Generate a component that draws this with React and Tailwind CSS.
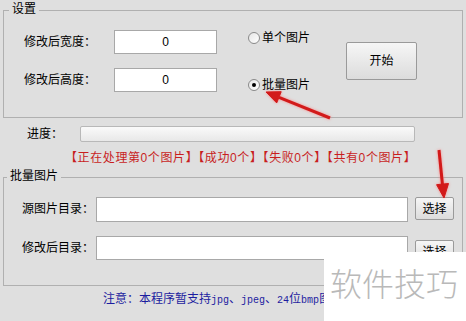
import React from 'react';

const Btn = ({ children, className }) => (
  <div
    className={
      'flex items-center justify-center border border-[#9a9a9a] rounded-[2px] bg-gradient-to-b from-[#f6f6f6] to-[#dcdcdc] ' +
      className
    }
  >
    {children}
  </div>
);

const Radio = ({ checked, label }) => (
  <div className="flex items-center h-[16px]">
    <div className="w-[12px] h-[12px] rounded-full border border-[#8a8a8a] bg-gradient-to-br from-[#e6e6e6] to-white flex items-center justify-center">
      {checked && <div className="w-[4px] h-[4px] rounded-full bg-black" />}
    </div>
    <span className="ml-[2px]">{label}</span>
  </div>
);

const App = () => {
  return (
    <div className="relative w-[466px] h-[321px] overflow-hidden bg-[#dfdfdf] text-[12px] leading-[16px] text-black font-['Liberation_Sans','Noto_Sans_CJK_SC',sans-serif]">
      {/* 设置 */}
      <div className="mx-[3px] mt-[10px] h-[108px] border border-[#b0b0b0]">
        <div className="-mt-[10px] ml-[5px] px-[3px] w-fit bg-[#dfdfdf]">设置</div>
        <div className="flex items-start mt-[13px]">
          <div className="pl-[20px] flex flex-col gap-[14px]">
            <div className="flex items-center">
              <span className="w-[90px]">修改后宽度：</span>
              <div className="w-[103px] h-[24px] border border-[#a8a8a8] bg-white text-center leading-[22px]">0</div>
            </div>
            <div className="flex items-center">
              <span className="w-[90px]">修改后高度：</span>
              <div className="w-[103px] h-[24px] border border-[#a8a8a8] bg-white text-center leading-[22px]">0</div>
            </div>
          </div>
          <div className="ml-[31px] w-[98px] flex flex-col">
            <Radio label="单个图片" />
            <div className="mt-[31px]">
              <Radio checked label="批量图片" />
            </div>
          </div>
          <Btn className="mt-[12px] w-[71px] h-[38px]">开始</Btn>
        </div>
      </div>

      {/* 进度 */}
      <div className="flex items-center mt-[8px] h-[16px]">
        <span className="pl-[27px] w-[80px]">进度：</span>
        <div className="w-[335px] h-[16px] border border-[#b8b8b8] rounded-[2px] bg-gradient-to-b from-[#fafafa] to-[#e8e8e8]" />
      </div>

      <div className="mt-[8px] pl-[65px] text-[#c81e1e] tracking-[0.6px] whitespace-nowrap">
        【正在处理第0个图片】【成功0个】【失败0个】【共有0个图片】
      </div>

      {/* 批量图片 */}
      <div className="mx-[3px] mt-[11px] h-[109px] border border-[#b0b0b0]">
        <div className="-mt-[10px] ml-[3px] px-[3px] w-fit bg-[#dfdfdf]">批量图片</div>
        <div className="mt-[13px] flex items-start">
          <span className="pl-[18px] w-[92px] leading-[25px]">源图片目录：</span>
          <div className="w-[312px] h-[25px] border border-[#a8a8a8] bg-white" />
          <Btn className="ml-[7px] w-[39px] h-[23px]">选择</Btn>
        </div>
        <div className="mt-[14px] flex items-start">
          <span className="pl-[18px] w-[92px] leading-[24px]">修改后目录：</span>
          <div className="w-[312px] h-[24px] border border-[#a8a8a8] bg-white" />
          <Btn className="ml-[7px] mt-[4px] w-[39px] h-[23px]">选择</Btn>
        </div>
      </div>

      <div className="mt-[5px] w-[324px] overflow-hidden pl-[103px] text-[#1c1ca0] whitespace-nowrap">
        注意：本程序暂支持<span className="font-['Liberation_Mono',monospace] text-[10px]">jpg</span>、<span className="font-['Liberation_Mono',monospace] text-[10px]">jpeg</span>、<span className="font-['Liberation_Mono',monospace] text-[10px]">24</span>位<span className="font-['Liberation_Mono',monospace] text-[10px]">bmp</span>图片
      </div>

      {/* watermark */}
      <div className="absolute left-[324px] top-[252px] w-[142px] h-[69px] bg-white">
        <div className="mt-[14px] pl-[6px] text-[32px] leading-[32px] text-[#b9b9b9] font-['Noto_Sans_CJK_SC',sans-serif] font-light whitespace-nowrap">
          软件技巧
        </div>
      </div>

      {/* arrows */}
      <svg className="absolute left-0 top-0 pointer-events-none" width="466" height="321">
        <g fill="#d21a1a" stroke="#d21a1a" style={{ filter: 'drop-shadow(0 0 1.5px rgba(255,120,120,0.8))' }}>
          <line x1="330" y1="118" x2="279" y2="97.3" strokeWidth="3" />
          <polygon points="266,92 281.2,91.7 276.7,102.9" strokeWidth="1" />
          <line x1="439" y1="150" x2="442.5" y2="185" strokeWidth="3" />
          <polygon points="444,198 448.5,183.5 436.6,184.7" strokeWidth="1" />
        </g>
      </svg>
    </div>
  );
};

export default App;
